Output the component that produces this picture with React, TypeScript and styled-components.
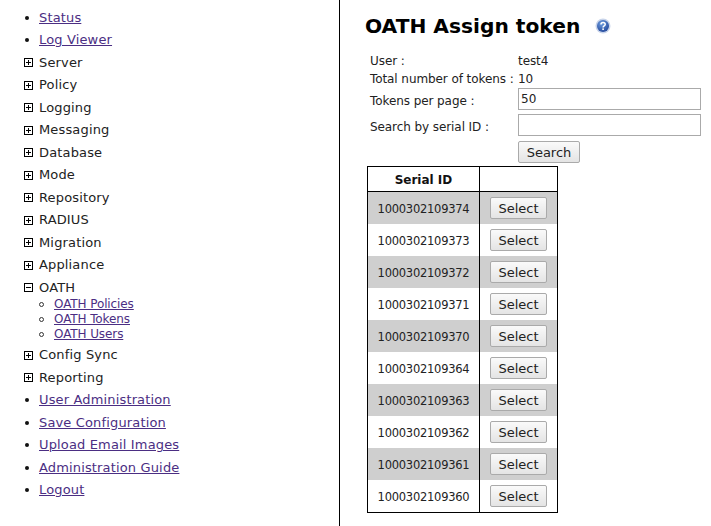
import React from "react";
import styled, { createGlobalStyle } from "styled-components";

const Global = createGlobalStyle`
  html, body { margin: 0; padding: 0; background: #fff; }
  body { font-family: "DejaVu Sans", Verdana, sans-serif; font-size: 12px; color: #222; }
  a { color: #4b2e83; }
`;

const Page = styled.div`
  display: flex;
  width: 711px;
  height: 526px;
  overflow: hidden;
`;

const Sidebar = styled.nav`
  width: 339px;
  height: 526px;
  flex: none;
  border-right: 1px solid #000;
  padding-top: 6.5px;
  box-sizing: content-box;
`;

const Menu = styled.ul`
  list-style: none;
  margin: 0;
  padding: 0 0 0 24px;
`;

const Item = styled.li`
  display: flex;
  flex-wrap: wrap;
  align-items: center;
  line-height: 22.5px;
  font-size: 13px;
  letter-spacing: 0.15px;
`;

const Marker = styled.span`
  width: 15px;
  flex: none;
  display: flex;
  align-items: center;
`;

const Bullet = styled.span`
  width: 4px;
  height: 4px;
  margin-left: 1px;
  border-radius: 50%;
  background: #111;
`;

const Toggle = styled.svg`
  width: 9px;
  height: 9px;
  display: block;
`;

const SubMenu = styled.ul`
  list-style: none;
  width: 100%;
  margin: -2.5px 0 2.7px;
  padding: 0 0 0 15px;
`;

const SubItem = styled.li`
  display: flex;
  align-items: center;
  height: 15px;
  font-size: 12px;
  line-height: 15px;
  letter-spacing: -0.1px;
`;

const Ring = styled.span`
  width: 5px;
  height: 5px;
  box-sizing: border-box;
  border: 1px solid #333;
  border-radius: 50%;
  margin-right: 10px;
`;

const Content = styled.main`
  flex: 1;
  padding: 13px 0 0 25px;
`;

const Title = styled.h1`
  display: flex;
  align-items: center;
  gap: 15px;
  margin: 0 0 13px;
  height: 26px;
  font-size: 20.2px;
  font-weight: 700;
  color: #000;
`;

const Form = styled.div`
  display: grid;
  grid-template-columns: 148px 183px;
  margin-left: 5px;
  font-size: 12px;
`;

const Label = styled.div<{ $h: number }>`
  height: ${(p) => p.$h}px;
  display: flex;
  align-items: center;
  white-space: nowrap;
  letter-spacing: -0.08px;
`;

const Input = styled.input`
  box-sizing: border-box;
  width: 183px;
  height: 22px;
  padding: 0 2px;
  border: 1px solid #aaa;
  font: inherit;
  color: #222;
  display: block;
`;

const Field = styled.div`
  height: 26px;
`;

const ActionField = styled.div`
  height: 25px;
  padding-top: 1px;
`;

const Btn = styled.button<{ $w: number }>`
  box-sizing: border-box;
  width: ${(p) => p.$w}px;
  height: 22px;
  padding: 0;
  border: 1px solid #aaa;
  border-radius: 2px;
  background: linear-gradient(#fafafa, #e4e4e4);
  font-family: inherit;
  font-size: 13px;
  color: #222;
`;

const Table = styled.table`
  width: 190px;
  margin-left: 2px;
  border-collapse: collapse;
  border: 1px solid #000;
  table-layout: fixed;
`;

const Th = styled.th`
  height: 23px;
  padding: 1px 0 0;
  border: 1px solid #000;
  font-size: 12px;
  color: #111;
`;

const Td = styled.td<{ $odd: boolean }>`
  height: 32px;
  padding: 0;
  text-align: center;
  border-left: 1px solid #000;
  background: ${(p) => (p.$odd ? "#cfcfcf" : "#fff")};
`;

const SerialTd = styled(Td)`
  height: 30px;
  padding-top: 2px;
  font-size: 11.5px;
  letter-spacing: -0.25px;
`;

const BtnCell = styled.div`
  display: flex;
  justify-content: center;
`;

const Help = () => (
  <svg width="16" height="16" viewBox="0 0 16 16">
    <defs>
      <radialGradient id="h" cx="0.4" cy="0.3" r="0.8">
        <stop offset="0" stopColor="#6f9fe0" />
        <stop offset="1" stopColor="#1c3f94" />
      </radialGradient>
    </defs>
    <circle cx="8" cy="8" r="7.5" fill="#c8d4ea" />
    <circle cx="8" cy="8" r="6" fill="url(#h)" />
    <path d="M6 6.4c0-2.4 4.2-2.4 4.2 0 0 1.5-2.1 1.5-2.1 3" fill="none" stroke="#fff" strokeWidth="1.5" />
    <rect x="7.3" y="10.4" width="1.6" height="1.6" fill="#fff" />
  </svg>
);

const Plus = ({ open }: { open?: boolean }) => (
  <Toggle viewBox="0 0 9 9">
    <rect x="0.5" y="0.5" width="8" height="8" fill="#fff" stroke="#000" />
    <path d={open ? "M2 4.5h5" : "M2 4.5h5M4.5 2v5"} stroke="#000" />
  </Toggle>
);

const link = (t: string) => (
  <Item key={t}>
    <Marker><Bullet /></Marker>
    <a href="#">{t}</a>
  </Item>
);
const group = (t: string) => (
  <Item key={t}>
    <Marker><Plus /></Marker>
    {t}
  </Item>
);

const serials = ["1000302109374","1000302109373","1000302109372","1000302109371","1000302109370","1000302109364","1000302109363","1000302109362","1000302109361","1000302109360"];

export default function App() {
  return (
    <Page>
      <Global />
      <Sidebar>
        <Menu>
          {["Status", "Log Viewer"].map(link)}
          {["Server","Policy","Logging","Messaging","Database","Mode","Repository","RADIUS","Migration","Appliance"].map(group)}
          <Item>
            <Marker><Plus open /></Marker>
            OATH
            <SubMenu>
              {["OATH Policies","OATH Tokens","OATH Users"].map((s) => (
                <SubItem key={s}><Ring /><a href="#">{s}</a></SubItem>
              ))}
            </SubMenu>
          </Item>
          {["Config Sync","Reporting"].map(group)}
          {["User Administration","Save Configuration","Upload Email Images","Administration Guide","Logout"].map(link)}
        </Menu>
      </Sidebar>
      <Content>
        <Title>OATH Assign token <Help /></Title>
        <Form>
          <Label $h={18}>User :</Label><Label $h={18}>test4</Label>
          <Label $h={18}>Total number of tokens :</Label><Label $h={18}>10</Label>
          <Label $h={26}>Tokens per page :</Label><Field><Input defaultValue="50" /></Field>
          <Label $h={26}>Search by serial ID :</Label><Field><Input /></Field>
          <span /><ActionField><Btn $w={62}>Search</Btn></ActionField>
        </Form>
        <Table>
          <colgroup><col width="112" /><col width="78" /></colgroup>
          <thead><tr><Th>Serial ID</Th><Th /></tr></thead>
          <tbody>
            {serials.map((s, i) => (
              <tr key={s}>
                <SerialTd $odd={i % 2 === 0}>{s}</SerialTd>
                <Td $odd={i % 2 === 0}><BtnCell><Btn $w={57}>Select</Btn></BtnCell></Td>
              </tr>
            ))}
          </tbody>
        </Table>
      </Content>
    </Page>
  );
}
